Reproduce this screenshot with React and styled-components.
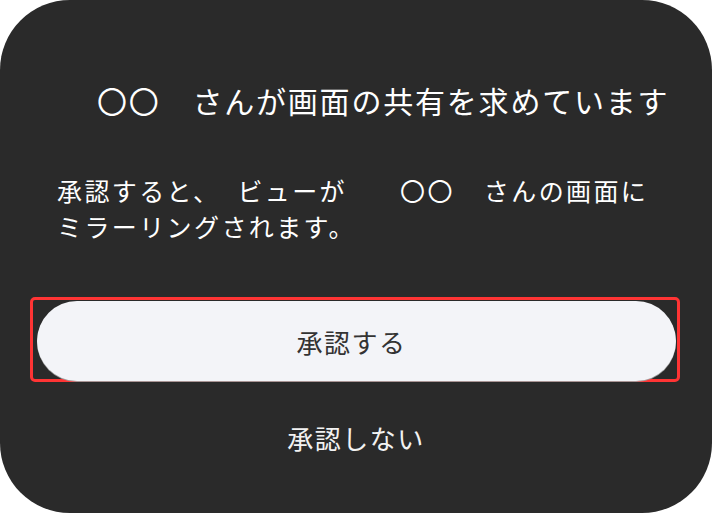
import React from "react";
import styled, { createGlobalStyle } from "styled-components";

const Global = createGlobalStyle`
  html, body { margin: 0; padding: 0; background: #ffffff; }
  body { font-family: "Noto Sans CJK JP", "Noto Sans", sans-serif; }
`;

const Card = styled.div`
  width: 712px;
  height: 513px;
  box-sizing: border-box;
  background: #2a2a2a;
  border-radius: 70px;
  padding-top: 80px;
  display: flex;
  flex-direction: column;
  color: #ffffff;
`;

const Title = styled.h1`
  margin: 0 0 52px 97px;
  font-size: 30px;
  font-weight: 400;
  line-height: 40px;
  letter-spacing: 1.8px;
  white-space: pre;
`;

const Body = styled.p`
  margin: 0 0 53px 57px;
  font-size: 25px;
  font-weight: 400;
  line-height: 36px;
  letter-spacing: 2.4px;
  white-space: pre;
`;

const Segment = styled.span`
  margin-right: ${(p) => p.$gap || 0}px;
`;

const Focus = styled.div`
  margin-left: 30px;
  width: 650px;
  height: 85px;
  box-sizing: border-box;
  border: 3px solid #ff3434;
  border-radius: 5px;
  display: flex;
`;

const Button = styled.button`
  margin: 1px 1px -2px 4px;
  flex: 1;
  border: none;
  border-radius: 40px;
  background: #f3f4f8;
  box-shadow: 0 1px 0 rgba(160, 160, 160, 0.9);
  color: #333333;
  font-family: inherit;
  font-size: 26px;
  letter-spacing: 1.5px;
  padding: 0 10px 0 0;
`;

const TextButton = styled.button`
  margin-top: 36px;
  align-self: center;
  background: none;
  border: none;
  color: #f2f2f2;
  font-family: inherit;
  font-size: 26px;
  line-height: 40px;
  letter-spacing: 1.5px;
  padding: 0;
`;

export default function App() {
  return (
    <>
      <Global />
      <Card>
        <Title>{"〇〇　さんが画面の共有を求めています"}</Title>
        <Body>
          <Segment $gap={17}>承認すると、</Segment>
          <Segment $gap={53}>ビューが</Segment>
          <Segment $gap={29}>〇〇</Segment>
          <Segment>さんの画面に</Segment>
          {"\n"}
          <Segment>ミラーリングされます。</Segment>
        </Body>
        <Focus>
          <Button>承認する</Button>
        </Focus>
        <TextButton>承認しない</TextButton>
      </Card>
    </>
  );
}
